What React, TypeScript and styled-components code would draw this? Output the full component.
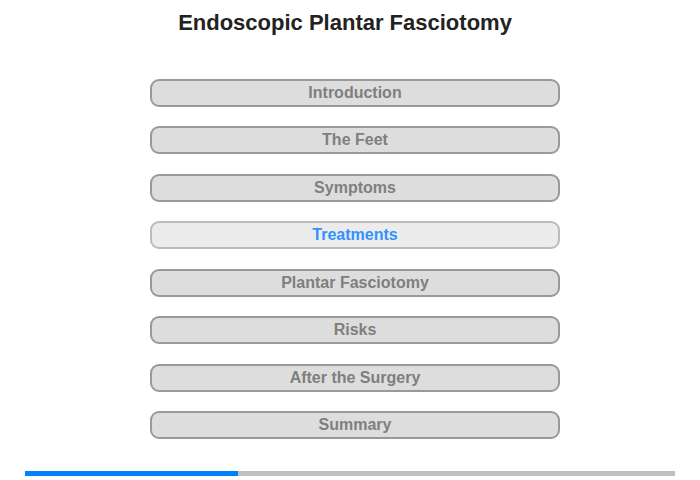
import React from "react";
import styled, { createGlobalStyle } from "styled-components";

const Global = createGlobalStyle`
  html, body { margin: 0; padding: 0; background: #fff; }
  body { font-family: "Liberation Sans", Arial, sans-serif; }
`;

const Page = styled.div`
  width: 700px;
  height: 480px;
  display: flex;
  flex-direction: column;
  align-items: center;
  padding-top: 10px;
  box-sizing: border-box;
`;

const Title = styled.h1`
  margin: 0 10px 0 0;
  font-size: 22px;
  line-height: 26px;
  font-weight: bold;
  color: #222;
`;

const Menu = styled.nav`
  margin: 43px 0 0 10px;
  display: flex;
  flex-direction: column;
  gap: 19.43px;
`;

const Item = styled.div<{ $active?: boolean }>`
  width: 410px;
  height: 28px;
  box-sizing: border-box;
  border: 2px solid ${(p) => (p.$active ? "#bbbbbb" : "#999999")};
  border-radius: 9px;
  background: ${(p) => (p.$active ? "#ececec" : "#dddddd")};
  color: ${(p) => (p.$active ? "#3391ff" : "#7f7f7f")};
  font-size: 16px;
  font-weight: bold;
  display: flex;
  align-items: center;
  justify-content: center;
`;

const Progress = styled.div`
  margin-top: 32px;
  width: 650px;
  height: 5px;
  background: #c0c0c0;
  display: flex;
`;

const Fill = styled.div`
  height: 100%;
  background: #007fff;
`;

const items = [
  "Introduction",
  "The Feet",
  "Symptoms",
  "Treatments",
  "Plantar Fasciotomy",
  "Risks",
  "After the Surgery",
  "Summary",
];

export default function App() {
  return (
    <Page>
      <Global />
      <Title>Endoscopic Plantar Fasciotomy</Title>
      <Menu>
        {items.map((t) => (
          <Item key={t} $active={t === "Treatments"}>
            {t}
          </Item>
        ))}
      </Menu>
      <Progress>
        <Fill style={{ width: 213 }} />
      </Progress>
    </Page>
  );
}
